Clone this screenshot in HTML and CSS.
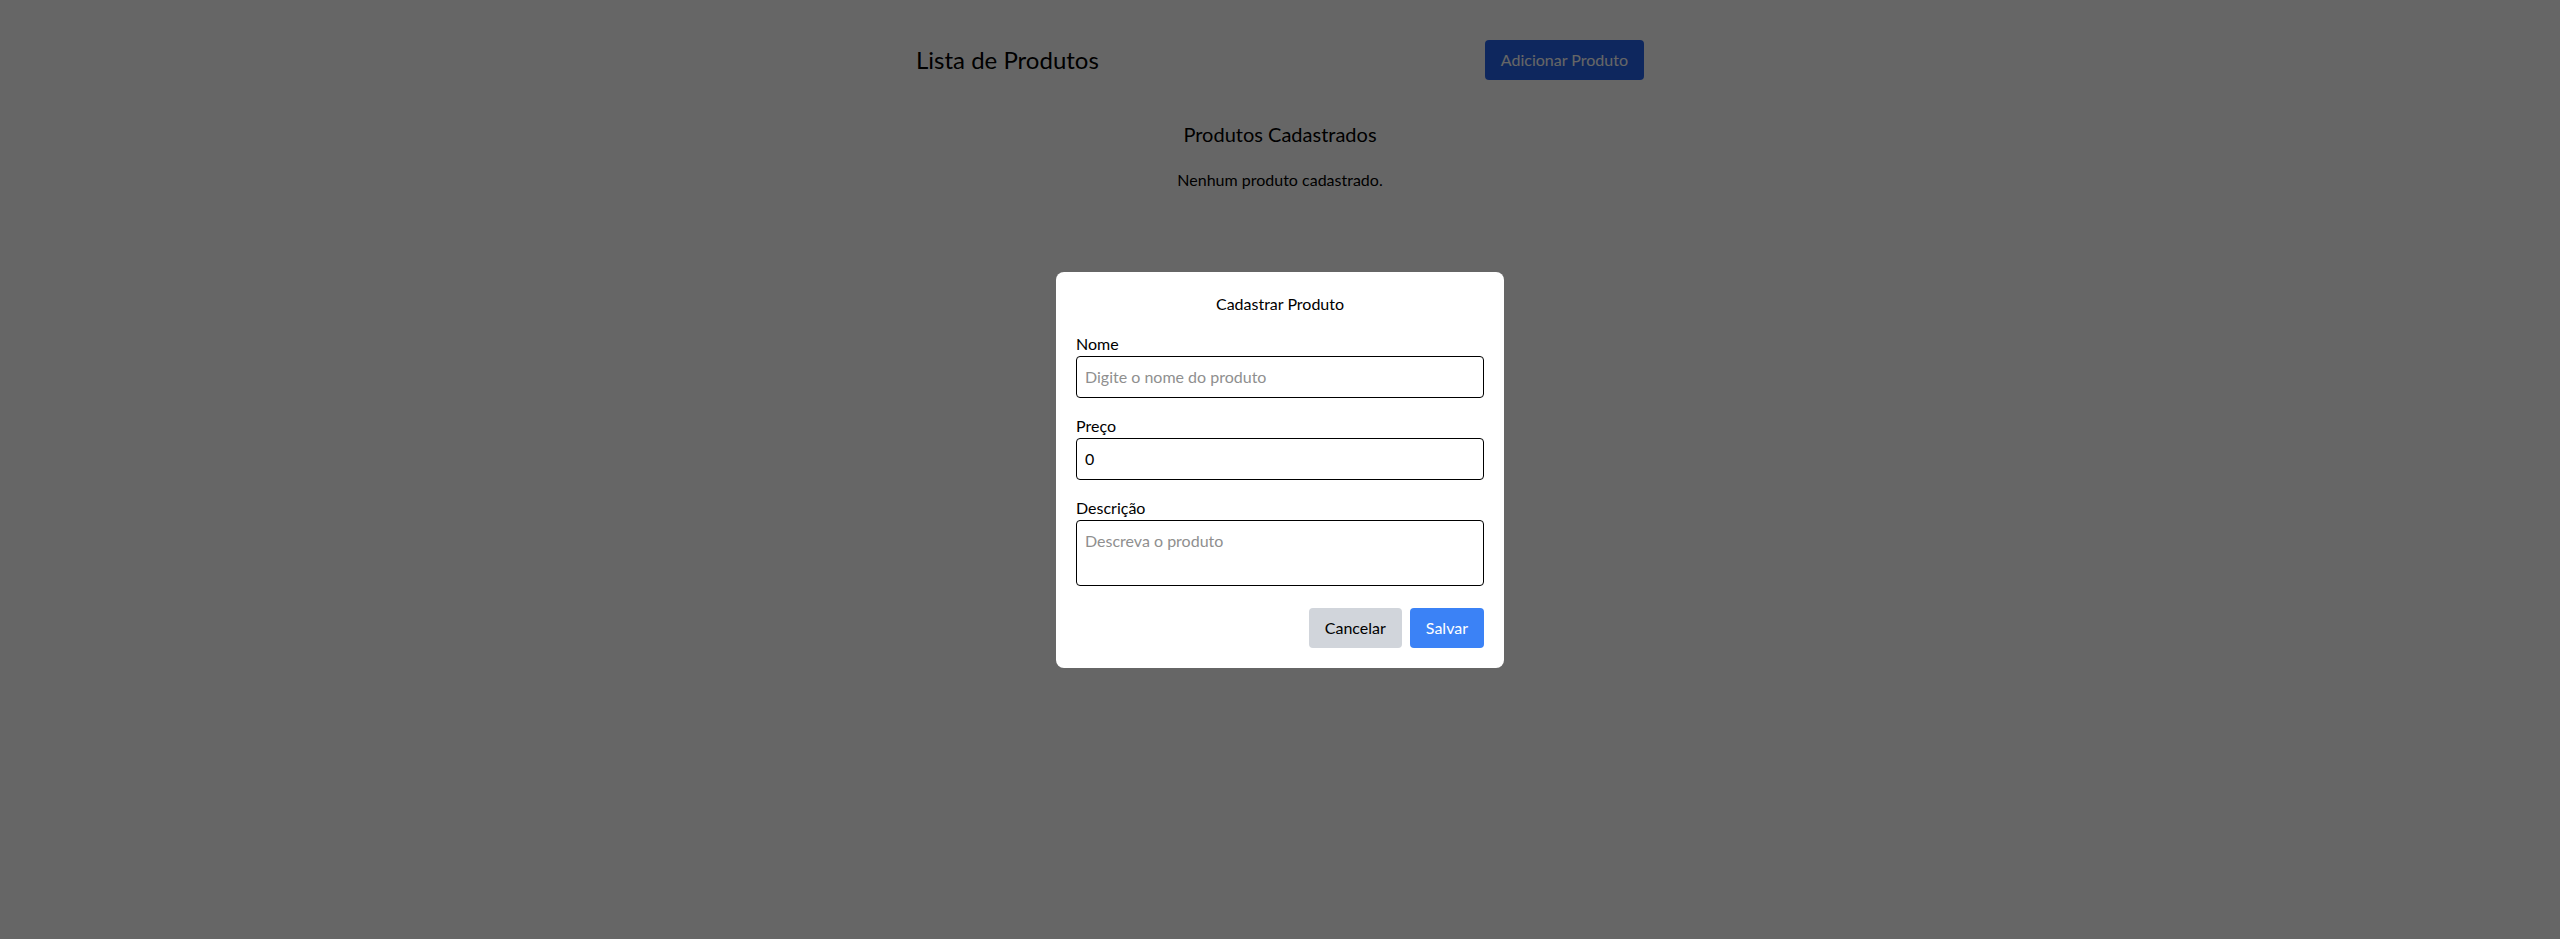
FILE: index.html
```html
<!DOCTYPE html>
<html lang="pt-BR">
<head>
<meta charset="utf-8">
<title>Lista de Produtos</title>
<link rel="stylesheet" href="styles.css">
</head>
<body>
<div class="container">
  <header class="header">
    <h1 class="page-title">Lista de Produtos</h1>
    <button class="btn btn-primary-dark">Adicionar Produto</button>
  </header>
  <section class="list">
    <h2 class="list-title">Produtos Cadastrados</h2>
    <p class="empty">Nenhum produto cadastrado.</p>
  </section>
</div>

<div class="overlay">
  <div class="modal">
    <h3 class="modal-title">Cadastrar Produto</h3>
    <form class="form">
      <div class="field">
        <label class="label" for="nome">Nome</label>
        <input class="input" id="nome" type="text" placeholder="Digite o nome do produto">
      </div>
      <div class="field">
        <label class="label" for="preco">Preço</label>
        <input class="input" id="preco" type="number" value="0">
      </div>
      <div class="field field-last">
        <label class="label" for="desc">Descrição</label>
        <textarea class="input textarea" id="desc" rows="2" placeholder="Descreva o produto"></textarea>
      </div>
      <div class="actions">
        <button type="button" class="btn btn-cancel">Cancelar</button>
        <button type="button" class="btn btn-save">Salvar</button>
      </div>
    </form>
  </div>
</div>
</body>
</html>
```
FILE: styles.css
```css
* { box-sizing: border-box; }
html, body { margin: 0; padding: 0; }
body {
  background: #ffffff;
  color: #000000;
  font-family: "Lato", "Liberation Sans", sans-serif;
  font-size: 16px;
  line-height: 24px;
}
.container {
  max-width: 768px;
  margin: 20px auto 0;
  padding: 20px;
}
.header {
  display: flex;
  justify-content: space-between;
  align-items: center;
  margin-bottom: 40px;
}
.page-title {
  margin: 0;
  font-size: 24px;
  line-height: 32px;
  font-weight: 400;
}
.btn {
  font-family: inherit;
  font-size: 16px;
  line-height: 24px;
  padding: 8px 16px;
  border: none;
  border-radius: 4px;
  cursor: pointer;
}
.btn-primary-dark { background: #2563eb; color: #ffffff; }
.list { text-align: center; }
.list-title {
  margin: 0 0 20px;
  font-size: 20px;
  line-height: 28px;
  font-weight: 400;
}
.empty { margin: 0; }

.overlay {
  position: fixed;
  inset: 0;
  background: rgba(0, 0, 0, 0.6);
  display: flex;
  align-items: center;
  justify-content: center;
}
.modal {
  width: 448px;
  background: #ffffff;
  border-radius: 8px;
  padding: 20px;
}
.modal-title {
  margin: 0 0 16px;
  text-align: center;
  font-size: 16px;
  line-height: 24px;
  font-weight: 400;
}
.form { margin: 0; }
.field { margin-bottom: 16px; }
.field-last { margin-bottom: 22px; }
.label { display: block; }
.input {
  display: block;
  width: 100%;
  height: 42px;
  padding: 8px;
  border: 1px solid #000000;
  border-radius: 4px;
  font-family: inherit;
  font-size: 16px;
  line-height: 24px;
  color: #000000;
  background: #ffffff;
  outline: none;
}
.input::placeholder { color: #8f8f8f; }
.textarea { height: 66px; resize: none; }
input[type=number]::-webkit-inner-spin-button,
input[type=number]::-webkit-outer-spin-button { -webkit-appearance: none; margin: 0; }
.actions {
  display: flex;
  justify-content: flex-end;
  gap: 8px;
}
.btn-cancel { background: #d1d5db; color: #000000; }
.btn-save { background: #3b82f6; color: #ffffff; }
```
